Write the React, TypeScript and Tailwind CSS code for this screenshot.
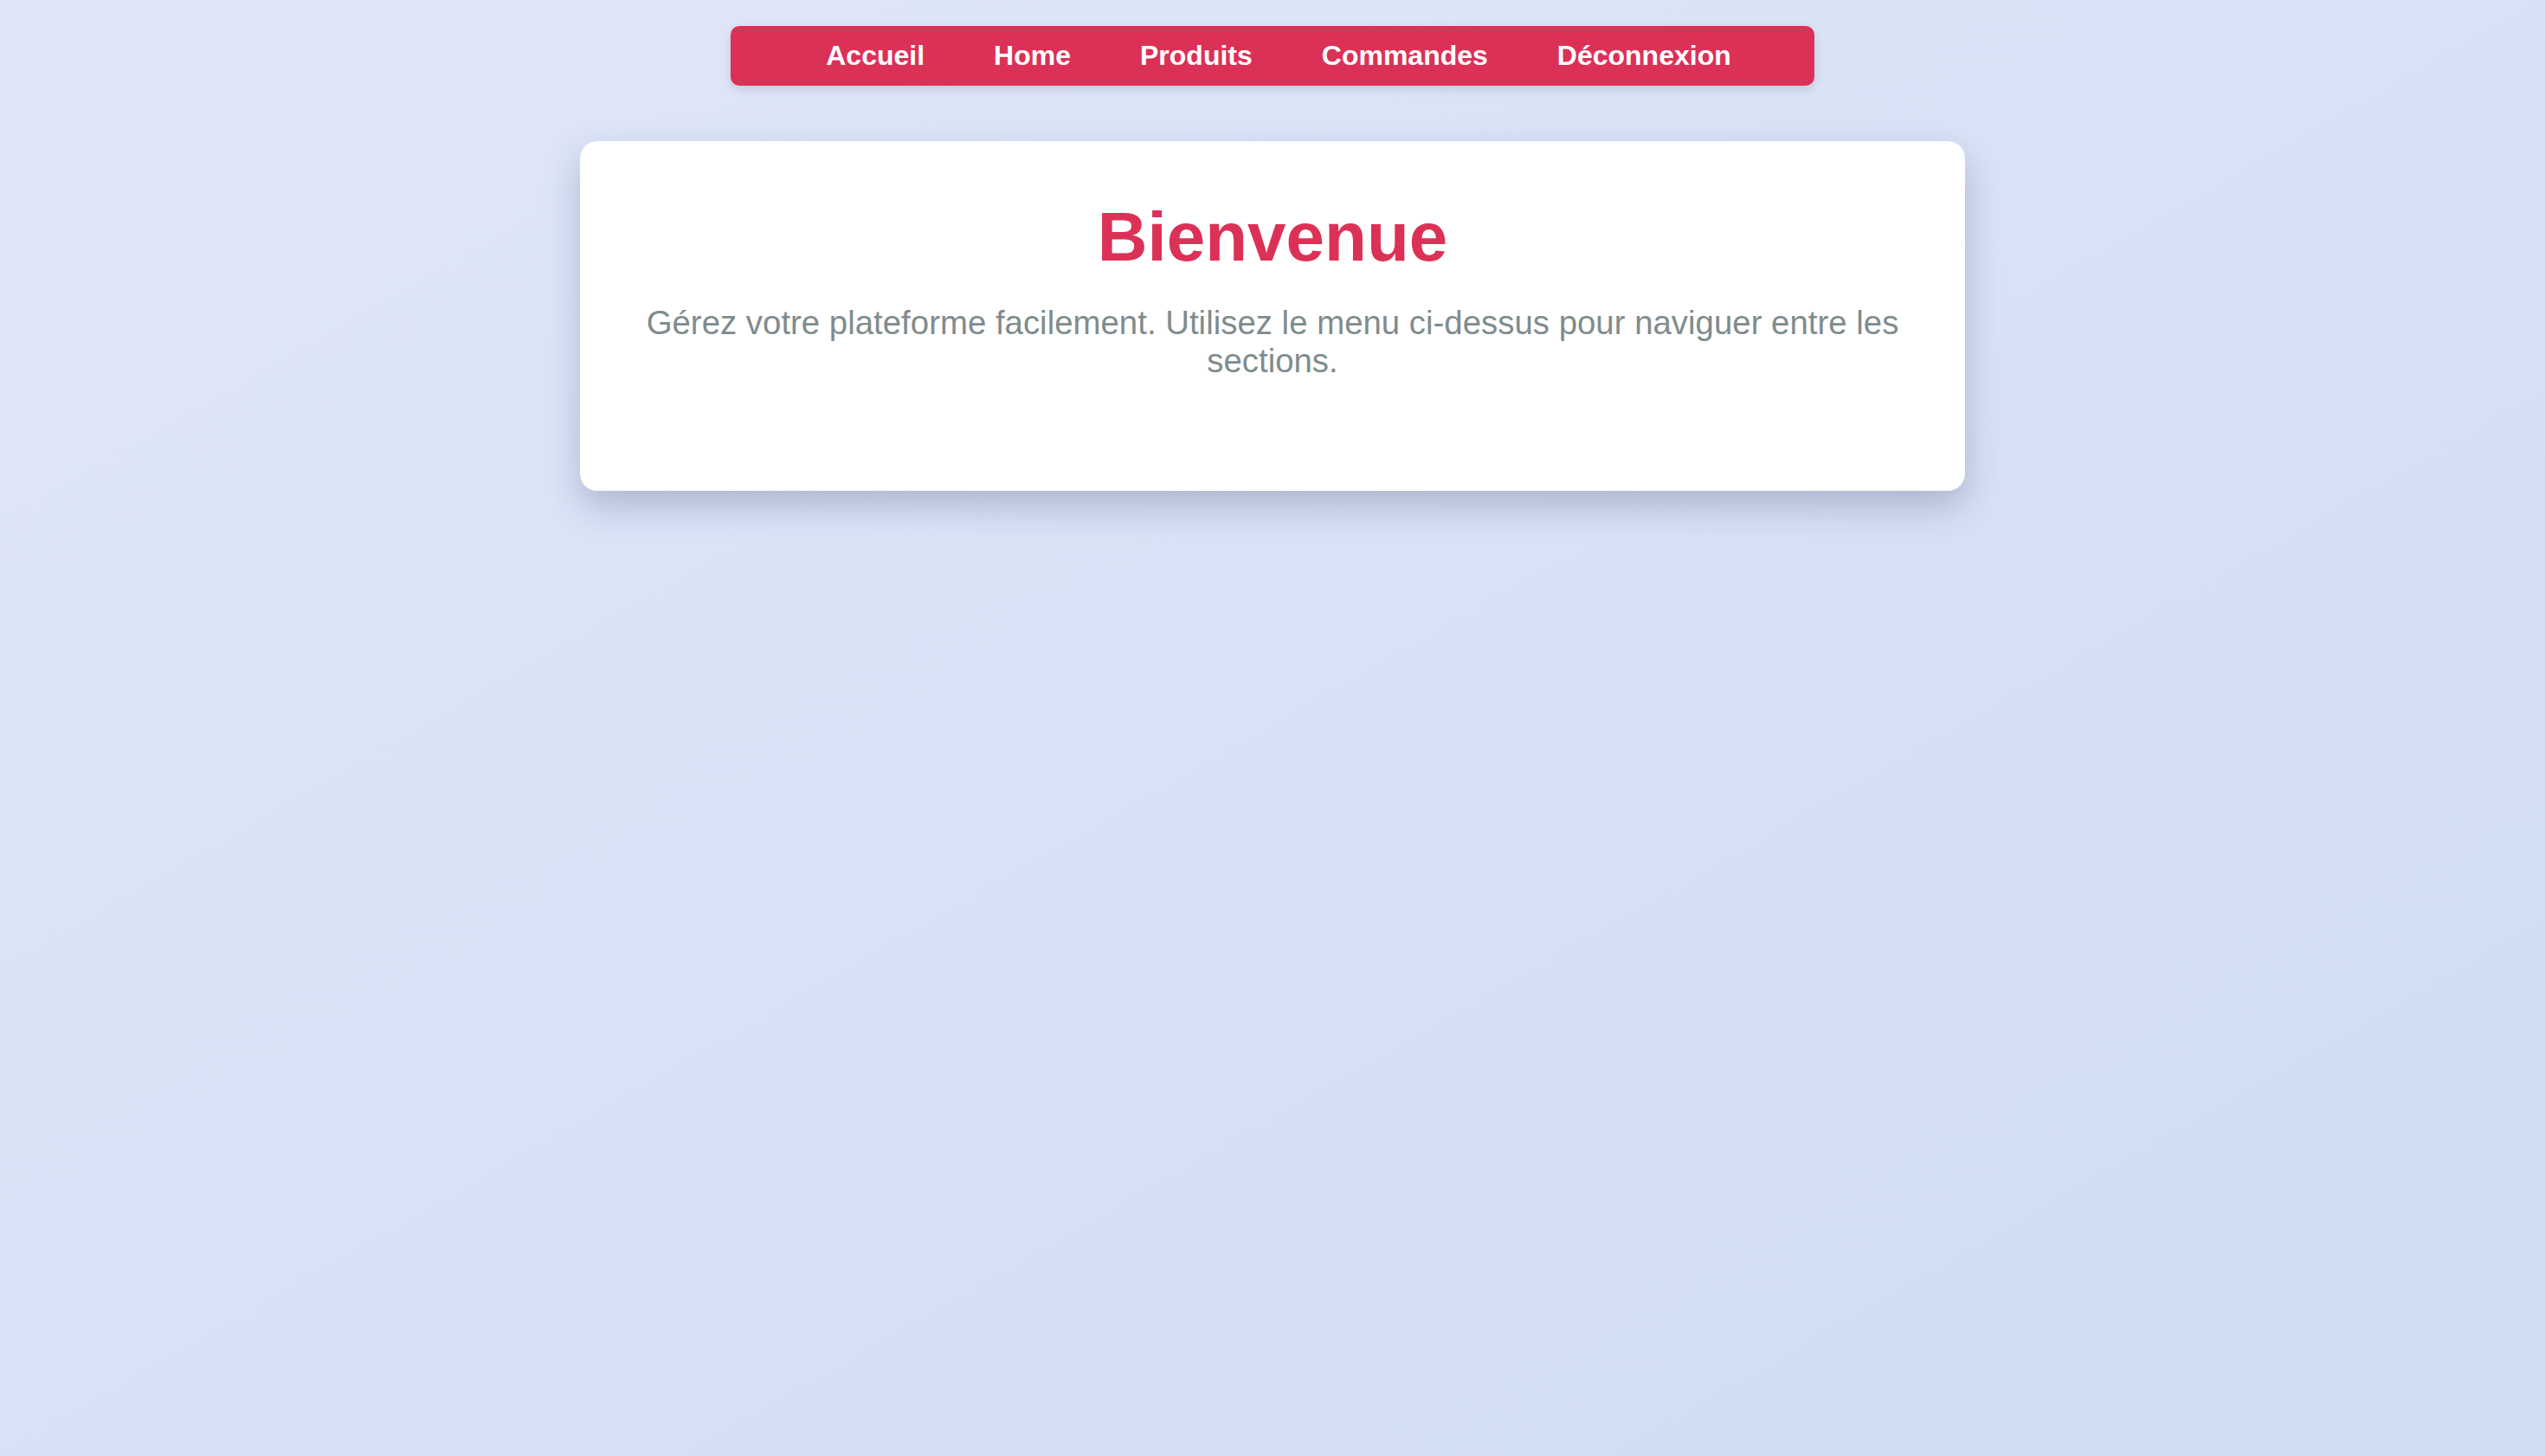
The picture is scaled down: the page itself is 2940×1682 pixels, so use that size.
const links = ['Accueil', 'Home', 'Produits', 'Commandes', 'Déconnexion'];

export default function App() {
  return (
    <main className="min-h-screen bg-gradient-to-br from-[#e1e7fa] to-[#cfdcf1] font-['Liberation_Sans',Arial,sans-serif]">
      <div className="flex flex-col items-center pt-[30px]">
        {/* top menu */}
        <nav className="flex w-[1252px] justify-center gap-[80px] rounded-[10px] bg-[#dc3157] py-4 pl-[14px] shadow-[0_4px_12px_rgba(0,0,0,0.12)]">
          {links.map((link) => (
            <a key={link} href="#" className="text-[32px] leading-[1.15] font-bold text-white">
              {link}
            </a>
          ))}
        </nav>

        <section className="mt-[64px] w-[1600px] rounded-[20px] bg-white px-[70px] pt-[65px] pb-[128px] text-center shadow-[0_18px_40px_rgba(40,50,90,0.25)]">
          <h1 className="text-[80px] leading-[1.15] font-bold text-[#dc3157]">Bienvenue</h1>
          <p className="mt-[31px] text-[38.4px] leading-[44px] text-[#7f8c8d]">
            Gérez votre plateforme facilement. Utilisez le menu ci-dessus pour
            naviguer entre les sections.
          </p>
        </section>
      </div>
    </main>
  );
}
